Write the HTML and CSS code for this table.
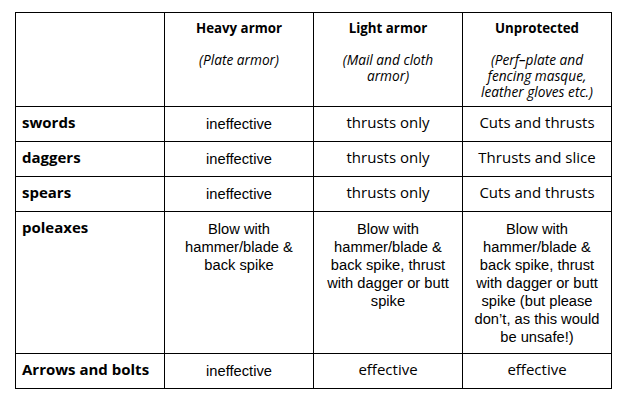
FILE: index.html
```html
<!DOCTYPE html>
<html>
<head>
<meta charset="utf-8">
<link rel="stylesheet" href="styles.css">
</head>
<body>
<div class="wrap">
<table class="grid">
  <colgroup>
    <col class="c"><col class="c"><col class="c"><col class="c">
  </colgroup>
  <tr class="head">
    <td></td>
    <td><div class="title">Heavy armor</div><div class="sub">(Plate armor)</div></td>
    <td><div class="title">Light armor</div><div class="sub">(Mail and cloth armor)</div></td>
    <td><div class="title">Unprotected</div><div class="sub">(Perf–plate and fencing masque, leather gloves etc.)</div></td>
  </tr>
  <tr>
    <td class="label">swords</td>
    <td class="val arial">ineffective</td>
    <td class="val">thrusts only</td>
    <td class="val">Cuts and thrusts</td>
  </tr>
  <tr>
    <td class="label">daggers</td>
    <td class="val arial">ineffective</td>
    <td class="val">thrusts only</td>
    <td class="val">Thrusts and slice</td>
  </tr>
  <tr>
    <td class="label">spears</td>
    <td class="val arial">ineffective</td>
    <td class="val">thrusts only</td>
    <td class="val">Cuts and thrusts</td>
  </tr>
  <tr>
    <td class="label">poleaxes</td>
    <td class="val arial">Blow with hammer/blade &amp; back spike</td>
    <td class="val arial">Blow with hammer/blade &amp; back spike, thrust with dagger or butt spike</td>
    <td class="val arial">Blow with hammer/blade &amp; back spike, thrust with dagger or butt spike (but please don’t, as this would be unsafe!)</td>
  </tr>
  <tr>
    <td class="label">Arrows and bolts</td>
    <td class="val arial">ineffective</td>
    <td class="val">effective</td>
    <td class="val">effective</td>
  </tr>
</table>
</div>
</body>
</html>
```
FILE: styles.css
```css
html, body {
  margin: 0;
  padding: 0;
  background: #fff;
}
.wrap {
  padding: 12px 15px;
}
.grid {
  border-collapse: collapse;
  table-layout: fixed;
  width: 597px;
  color: #000;
}
.grid .c {
  width: 149px;
}
.grid td {
  border: 1px solid #000;
  vertical-align: top;
  padding: 6px 6px 9px;
}
.head td {
  text-align: center;
  padding: 6px 8px 6px;
}
.title {
  font-family: "Open Sans", sans-serif;
  font-weight: 700;
  font-size: 13.3px;
  line-height: 18px;
  margin-bottom: 15px;
}
.sub {
  font-family: "Open Sans", sans-serif;
  font-style: italic;
  font-size: 13.7px;
  line-height: 16px;
}
.label {
  font-family: "Open Sans", sans-serif;
  font-weight: 700;
  font-size: 15px;
  line-height: 19px;
}
.val {
  font-family: "Open Sans", sans-serif;
  font-size: 15px;
  line-height: 19px;
  text-align: center;
}
.grid td.arial {
  font-family: "Liberation Sans", Arial, sans-serif;
  font-size: 14.7px;
  line-height: 18px;
  padding: 8px 6px 7px;
}
```
